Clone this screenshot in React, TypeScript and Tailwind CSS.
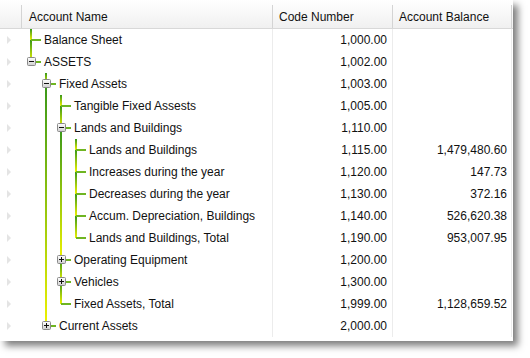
import React from "react";

type Kind = "leaf" | "open" | "closed";

interface Row {
    name: string;
    code: string;
    balance?: string;
    level: number;
    kind: Kind;
}

const rows: Row[] = [
    { name: "Balance Sheet", code: "1,000.00", level: 0, kind: "leaf" },
    { name: "ASSETS", code: "1,002.00", level: 0, kind: "open" },
    { name: "Fixed Assets", code: "1,003.00", level: 1, kind: "open" },
    { name: "Tangible Fixed Assests", code: "1,005.00", level: 2, kind: "leaf" },
    { name: "Lands and Buildings", code: "1,110.00", level: 2, kind: "open" },
    { name: "Lands and Buildings", code: "1,115.00", balance: "1,479,480.60", level: 3, kind: "leaf" },
    { name: "Increases during the year", code: "1,120.00", balance: "147.73", level: 3, kind: "leaf" },
    { name: "Decreases during the year", code: "1,130.00", balance: "372.16", level: 3, kind: "leaf" },
    { name: "Accum. Depreciation, Buildings", code: "1,140.00", balance: "526,620.38", level: 3, kind: "leaf" },
    { name: "Lands and Buildings, Total", code: "1,190.00", balance: "953,007.95", level: 3, kind: "leaf" },
    { name: "Operating Equipment", code: "1,200.00", level: 2, kind: "closed" },
    { name: "Vehicles", code: "1,300.00", level: 2, kind: "closed" },
    { name: "Fixed Assets, Total", code: "1,999.00", balance: "1,128,659.52", level: 2, kind: "leaf" },
    { name: "Current Assets", code: "2,000.00", level: 1, kind: "closed" },
];

const ROW_H = 22;
const GREEN = "#38971a";
const YELLOW = "#eef200";

// groupes de frères : une ligne verticale par groupe, coupée en segments
interface Group {
    level: number;
    segs: [number, number][];
}

function buildGroups(): Group[] {
    const byParent = new Map<number, number[]>();
    rows.forEach((row, i) => {
        let parent = -1;
        for (let j = i - 1; j >= 0; j--) {
            if (rows[j].level === row.level - 1) {
                parent = j;
                break;
            }
        }
        const list = byParent.get(parent) ?? [];
        list.push(i);
        byParent.set(parent, list);
    });
    const groups: Group[] = [];
    byParent.forEach((children) => {
        const level = rows[children[0]].level;
        const segs: [number, number][] = [];
        let prev = children[0] * ROW_H;
        children.forEach((c) => {
            const center = c * ROW_H + 11;
            segs.push([prev, center]);
            prev = center;
        });
        groups.push({ level, segs });
    });
    return groups;
}

const groups = buildGroups();

function TreeLines({ index }: { index: number }) {
    const row = rows[index];
    const width = 23 + 15 * row.level;
    const top = index * ROW_H;
    const cx = 10 + 15 * row.level;

    const pieces: { x: number; y: number; h: number; ga: number; gb: number; id: string }[] = [];
    groups.forEach((g) => {
        if (g.level > row.level) return;
        g.segs.forEach(([a, b], s) => {
            const y0 = Math.max(a, top);
            const y1 = Math.min(b, top + ROW_H);
            if (y1 <= y0) return;
            pieces.push({
                x: 9 + 15 * g.level,
                y: y0 - top,
                h: y1 - y0,
                ga: a - top,
                gb: b - top,
                id: `tl-${index}-${g.level}-${s}`,
            });
        });
    });

    const hasBox = row.kind !== "leaf";

    return (
        <svg width={width} height={ROW_H} className="shrink-0">
            <defs>
                {pieces.map((p) => (
                    <linearGradient key={p.id} id={p.id} gradientUnits="userSpaceOnUse" x1="0" x2="0" y1={p.ga} y2={p.gb}>
                        <stop offset="0" stopColor={GREEN} />
                        <stop offset="1" stopColor={YELLOW} />
                    </linearGradient>
                ))}
                <linearGradient id={`bx-${index}`} x1="0" x2="0" y1="0" y2="1">
                    <stop offset="0" stopColor="#ffffff" />
                    <stop offset="1" stopColor="#cfcfcf" />
                </linearGradient>
            </defs>
            {pieces.map((p) => (
                <rect key={p.id} x={p.x} y={p.y} width="2" height={p.h} fill={`url(#${p.id})`} />
            ))}
            {/* tiret horizontal vers le libellé */}
            <rect x={hasBox ? cx + 5 : cx} y="10" width={hasBox ? width - 3 - cx - 5 : width - 3 - cx} height="2" fill="#6fb522" />
            {hasBox && (
                <g>
                    <rect x={cx - 3.5} y="6.5" width="8" height="8" rx="1" fill={`url(#bx-${index})`} stroke="#8a8a8a" />
                    <rect x={cx - 2} y="10" width="5" height="1" fill="#111" />
                    {row.kind === "closed" && <rect x={cx} y="8" width="1" height="5" fill="#111" />}
                </g>
            )}
        </svg>
    );
}

export default function App() {
    return (
        <div className="w-[530px] h-[358px] bg-white" style={{ fontFamily: '"Liberation Sans", Arial, sans-serif' }}>
            <div className="w-[513px] h-[341px] bg-white shadow-[5px_5px_7px_rgba(0,0,0,0.5)] text-[12px] text-[#111]">
                {/* En-tête */}
                <div className="grid grid-cols-[21px_251px_120px_120px] h-[29px] border-b border-[#d8d8d8] bg-gradient-to-b from-white to-[#f0f0f0]">
                    <div />
                    <div className="mt-[5px] h-[23px] border-l border-[#d4d4d4] pl-[7px] flex items-center">Account Name</div>
                    <div className="mt-[5px] h-[23px] border-l border-[#d4d4d4] pl-[6px] flex items-center">Code Number</div>
                    <div className="mt-[5px] h-[23px] border-l border-r border-[#d4d4d4] pl-[6px] flex items-center">Account Balance</div>
                </div>

                {/* Lignes */}
                {rows.map((row, i) => (
                    <div key={i} className="grid grid-cols-[21px_251px_120px_120px] h-[22px]">
                        <div className="flex items-center">
                            <svg width="21" height="22">
                                <polygon points="7,7 11,11 7,15" fill="#e4e4e4" />
                            </svg>
                        </div>
                        <div className="flex items-center whitespace-nowrap overflow-hidden">
                            <TreeLines index={i} />
                            <span>{row.name}</span>
                        </div>
                        <div className="border-l border-[#ececec] flex items-center justify-end pr-[5px]">{row.code}</div>
                        <div className="border-l border-r border-[#ececec] flex items-center justify-end pr-[4px]">{row.balance ?? ""}</div>
                    </div>
                ))}
            </div>
        </div>
    );
}
